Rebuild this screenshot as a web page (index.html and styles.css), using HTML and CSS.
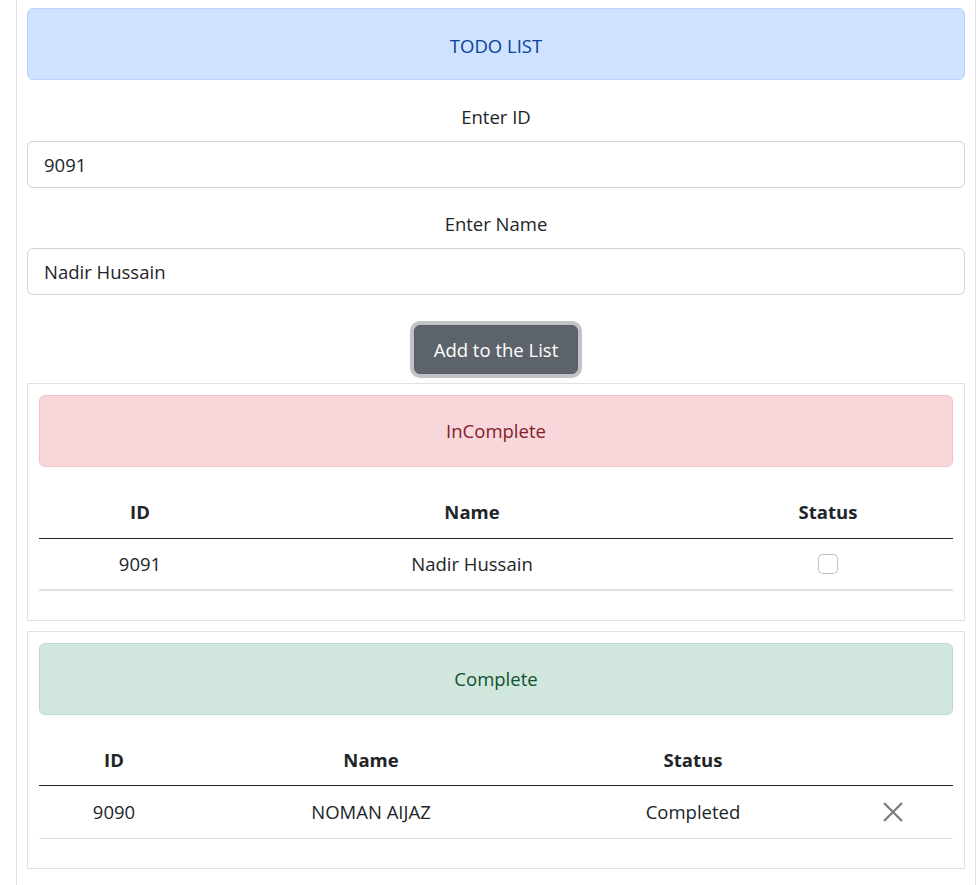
FILE: index.html
```html
<!DOCTYPE html>
<html>
<head>
<meta charset="utf-8">
<link rel="stylesheet" href="styles.css">
</head>
<body>
<div class="page">
  <div class="alert alert-primary">TODO LIST</div>

  <label class="field-label">Enter ID</label>
  <input class="field-input" type="text" value="9091">

  <label class="field-label">Enter Name</label>
  <input class="field-input" type="text" value="Nadir Hussain">

  <div class="btn-row">
    <button class="btn">Add to the List</button>
  </div>

  <div class="card">
    <div class="alert alert-danger">InComplete</div>
    <table class="table">
      <colgroup>
        <col style="width:202px"><col style="width:462px"><col style="width:250px">
      </colgroup>
      <thead>
        <tr><th>ID</th><th>Name</th><th>Status</th></tr>
      </thead>
      <tbody>
        <tr class="row-thick">
          <td>9091</td>
          <td>Nadir Hussain</td>
          <td><span class="checkbox"></span></td>
        </tr>
      </tbody>
    </table>
  </div>

  <div class="card">
    <div class="alert alert-success">Complete</div>
    <table class="table">
      <colgroup>
        <col style="width:150px"><col style="width:364px"><col style="width:280px"><col style="width:120px">
      </colgroup>
      <thead>
        <tr><th>ID</th><th>Name</th><th>Status</th><th></th></tr>
      </thead>
      <tbody>
        <tr class="row-tall">
          <td>9090</td>
          <td>NOMAN AIJAZ</td>
          <td>Completed</td>
          <td>
            <svg class="close-icon" width="22" height="22" viewBox="0 0 22 22" aria-hidden="true">
              <path d="M2 2 L20 20 M20 2 L2 20" stroke="#7f7f7f" stroke-width="2.4" stroke-linecap="butt" fill="none"/>
            </svg>
          </td>
        </tr>
      </tbody>
    </table>
  </div>
</div>
</body>
</html>
```

FILE: styles.css
```css
* {
  box-sizing: border-box;
}

html, body {
  margin: 0;
  padding: 0;
  background: #ffffff;
}

body {
  font-family: "Open Sans", "Noto Sans", "Liberation Sans", sans-serif;
  font-size: 18.5px;
  line-height: 30px;
  color: #212529;
}

.page {
  margin-left: 16px;
  width: 960px;
  min-height: 885px;
  border-left: 1px solid #dee2e6;
  border-right: 1px solid #dee2e6;
  padding: 8px 10px 0 10px;
}

.alert {
  height: 72px;
  border: 1px solid transparent;
  border-radius: 6px;
  padding: 20px;
  text-align: center;
}

.alert-primary {
  background: #cfe2ff;
  border-color: #b6d4fe;
  color: #084298;
  margin-bottom: 22px;
  padding-top: 22px;
  padding-bottom: 18px;
}

.alert-danger {
  background: #f8d7da;
  border-color: #f5c2c7;
  color: #842029;
  margin-bottom: 20px;
}

.alert-success {
  background: #d1e7dd;
  border-color: #badbcc;
  color: #0f5132;
  margin-bottom: 20px;
}

.field-label {
  display: block;
  text-align: center;
  margin-bottom: 9px;
}

.field-input {
  display: block;
  width: 100%;
  height: 47px;
  margin: 0 0 21px 0;
  padding: 8px 16px;
  font: inherit;
  color: #212529;
  background: #ffffff;
  border: 1px solid #ced4da;
  border-radius: 6px;
  outline: none;
}

.btn-row {
  display: flex;
  justify-content: center;
  margin-top: 30px;
  margin-bottom: 9px;
}

.btn {
  height: 49px;
  padding: 8px 19px;
  font: inherit;
  color: #ffffff;
  background: #5c636a;
  border: 1px solid #565e64;
  border-radius: 6px;
  box-shadow: 0 0 0 4px rgba(130, 138, 145, 0.5);
  cursor: pointer;
}

.card {
  border: 1px solid #dee2e6;
  padding: 11px;
  margin-bottom: 10px;
}

.table {
  width: 100%;
  border-collapse: collapse;
  table-layout: fixed;
  margin-bottom: 18px;
}

.table th,
.table td {
  text-align: center;
  padding: 10px;
  height: 51px;
  vertical-align: middle;
}

.table th {
  font-weight: 700;
  border-bottom: 1px solid #212529;
}

.table td {
  border-bottom: 1px solid #dee2e6;
}

.row-thick td {
  border-bottom: 2px solid #dee2e6;
}

.row-tall td {
  height: 53px;
}

.checkbox {
  display: block;
  margin: 0 auto;
  width: 20px;
  height: 20px;
  border: 1px solid rgba(0, 0, 0, 0.25);
  border-radius: 5px;
  background: #ffffff;
}

.close-icon {
  display: block;
  margin: 0 auto;
}
```
